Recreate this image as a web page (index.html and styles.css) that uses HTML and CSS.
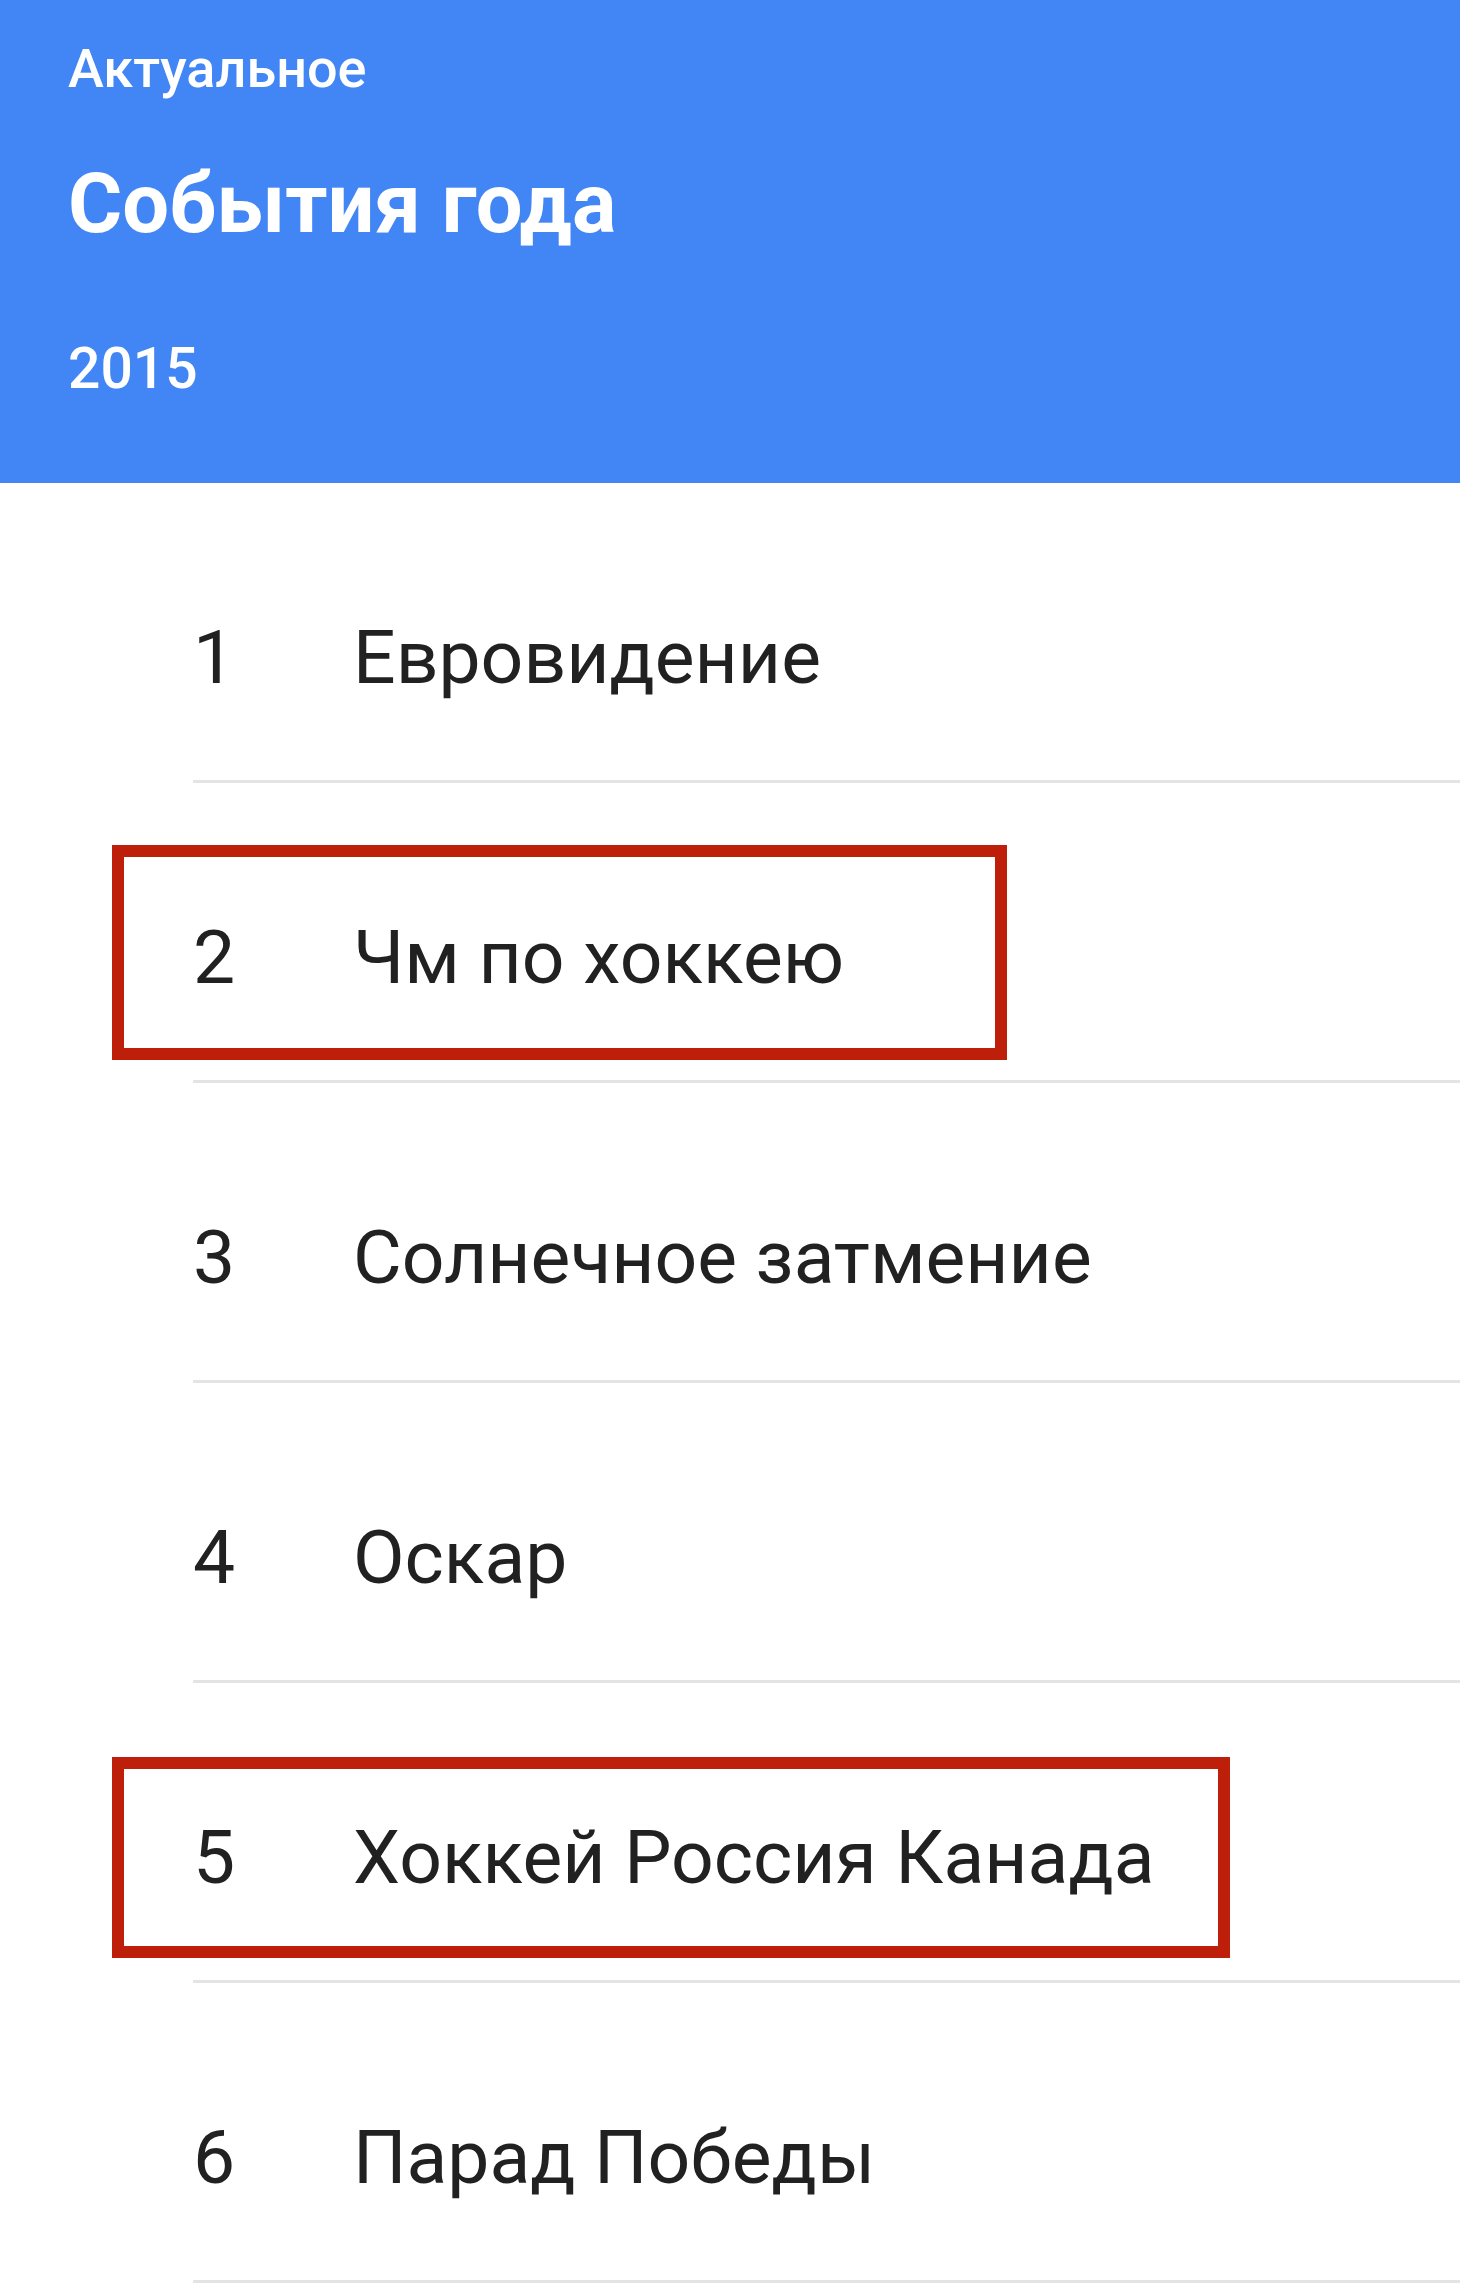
FILE: index.html
```html
<!DOCTYPE html>
<html lang="ru">
<head>
<meta charset="utf-8">
<title>События года</title>
<link rel="stylesheet" href="styles.css">
</head>
<body>
<header class="hero">
  <div class="kicker">Актуальное</div>
  <h1 class="title">События года</h1>
  <div class="year">2015</div>
</header>
<ol class="list">
  <li class="row"><span class="num">1</span><span class="name">Евровидение</span></li>
  <li class="row"><span class="num">2</span><span class="name">Чм по хоккею</span><span class="mark mark-a"></span></li>
  <li class="row"><span class="num">3</span><span class="name">Солнечное затмение</span></li>
  <li class="row"><span class="num">4</span><span class="name">Оскар</span></li>
  <li class="row"><span class="num">5</span><span class="name">Хоккей Россия Канада</span><span class="mark mark-b"></span></li>
  <li class="row"><span class="num">6</span><span class="name">Парад Победы</span></li>
</ol>
</body>
</html>
```
FILE: styles.css
```css
html, body {
  margin: 0;
  padding: 0;
  background: #ffffff;
}
body {
  font-family: Roboto, "Noto Sans", "Liberation Sans", sans-serif;
  overflow: hidden;
}
.hero {
  background: #4285f4;
  color: #ffffff;
  height: 483px;
  box-sizing: border-box;
  padding: 39px 0 0 68px;
}
.kicker {
  font-size: 54px;
  line-height: 60px;
  font-weight: 500;
}
.title {
  margin: 55px 0 0 0;
  font-size: 83px;
  line-height: 100px;
  font-weight: 700;
}
.year {
  margin-top: 85px;
  font-size: 57px;
  line-height: 60px;
  font-weight: 500;
}
.list {
  list-style: none;
  margin: 0;
  padding: 0;
}
.row {
  position: relative;
  display: flex;
  align-items: flex-start;
  height: 300px;
  box-sizing: border-box;
  margin-left: 193px;
  padding-top: 129px;
  border-bottom: 3px solid #e4e4e4;
  color: #212121;
  font-size: 75px;
  line-height: 90px;
}
.num {
  width: 160px;
  flex: none;
}
.name {
  white-space: nowrap;
}
.mark {
  position: absolute;
  left: -81px;
  border: 12px solid #bd1f0a;
  box-sizing: border-box;
}
.mark-a {
  top: 62px;
  width: 895px;
  height: 215px;
}
.mark-b {
  top: 74px;
  width: 1118px;
  height: 201px;
}
```
